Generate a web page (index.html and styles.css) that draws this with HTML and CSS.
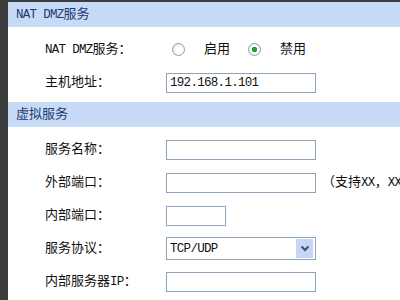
FILE: index.html
```html
<!DOCTYPE html>
<html lang="zh-CN">

<head>
    <meta charset="UTF-8">
    <title>NAT DMZ服务</title>
    <link rel="stylesheet" href="styles.css">
</head>

<body>
    <div class="page">
        <div class="section-title"><span class="en">NAT DMZ</span>服务</div>
        <div class="form-block">
            <div class="form-row">
                <span class="label"><span class="en">NAT DMZ</span>服务：</span>
                <span class="radio"></span><span class="radio-text">启用</span>
                <span class="radio checked"></span><span class="radio-text">禁用</span>
            </div>
            <div class="form-row">
                <span class="label">主机地址：</span>
                <input class="text-input" type="text" value="192.168.1.101">
            </div>
        </div>

        <div class="section-title">虚拟服务</div>
        <div class="form-block">
            <div class="form-row">
                <span class="label">服务名称：</span>
                <input class="text-input" type="text">
            </div>
            <div class="form-row">
                <span class="label">外部端口：</span>
                <input class="text-input" type="text">
                <span class="hint">（支持<span class="en">XX</span>，<span class="en">XX-XX</span>格式）</span>
            </div>
            <div class="form-row">
                <span class="label">内部端口：</span>
                <input class="text-input short" type="text">
            </div>
            <div class="form-row">
                <span class="label">服务协议：</span>
                <div class="select-wrap">
                    <select class="select">
                        <option>TCP/UDP</option>
                        <option>TCP</option>
                        <option>UDP</option>
                    </select>
                    <span class="select-arrow">
                        <svg width="10" height="7" viewBox="0 0 10 7">
                            <path d="M1.5 1.5 L5 5 L8.5 1.5" fill="none" stroke="#3f5282" stroke-width="2.2" />
                        </svg>
                    </span>
                </div>
            </div>
            <div class="form-row">
                <span class="label">内部服务器<span class="en">IP</span>：</span>
                <input class="text-input" type="text">
            </div>
        </div>
    </div>
</body>

</html>
```

FILE: styles.css
```css
body {
    margin: 0;
    padding: 0;
    background-color: #3d3d3d;
    font-family: "Liberation Mono", "Noto Sans CJK SC", monospace;
    font-size: 13px;
    line-height: 16px;
    color: #111111;
}

.page {
    margin: 2px 0 0 8px;
    height: 298px;
    background: #ffffff;
    overflow: hidden;
}

.en {
    font-size: 12.5px;
    letter-spacing: -0.7px;
}

.section-title {
    height: 25px;
    line-height: 25px;
    padding-left: 8px;
    background-color: #c7dbf6;
    color: #1d3a73;
}

.form-block {
    padding: 6px 0 3px;
}

.form-row {
    display: flex;
    align-items: center;
    height: 33px;
    white-space: nowrap;
}

.label {
    width: 121px;
    padding-left: 37px;
    flex-shrink: 0;
}

.text-input {
    width: 150px;
    height: 20px;
    box-sizing: border-box;
    margin: 0;
    padding: 0 3px;
    border: 1px solid #8ea4bd;
    font-family: "Liberation Mono", monospace;
    font-size: 12.5px;
    letter-spacing: -0.7px;
    color: #111111;
    outline: none;
}

.text-input.short {
    width: 60px;
}

.radio {
    width: 13px;
    height: 13px;
    box-sizing: border-box;
    margin-left: 6px;
    border: 1px solid #8a9db3;
    border-radius: 50%;
    background: radial-gradient(circle at 60% 60%, #ffffff 30%, #dfe4ea 100%);
    flex-shrink: 0;
}

.radio.checked {
    background: radial-gradient(circle, #2eaa3a 0, #23932f 2.5px, #ffffff 3px, #e3e7ec 100%);
}

.radio-text {
    margin-left: 19px;
    margin-right: 12px;
}

.hint {
    margin-left: 6px;
}

.select-wrap {
    position: relative;
    width: 150px;
    height: 23px;
}

.select {
    appearance: none;
    -webkit-appearance: none;
    width: 100%;
    height: 100%;
    margin: 0;
    padding: 0 3px;
    border: 1px solid #8ea4bd;
    border-radius: 0;
    background: #ffffff;
    font-family: "Liberation Mono", monospace;
    font-size: 12.5px;
    letter-spacing: -0.7px;
    color: #111111;
    outline: none;
}

.select-arrow {
    position: absolute;
    top: 2px;
    right: 3px;
    width: 17px;
    height: 19px;
    display: flex;
    align-items: center;
    justify-content: center;
    background: #c6d6f7;
    pointer-events: none;
}
```
